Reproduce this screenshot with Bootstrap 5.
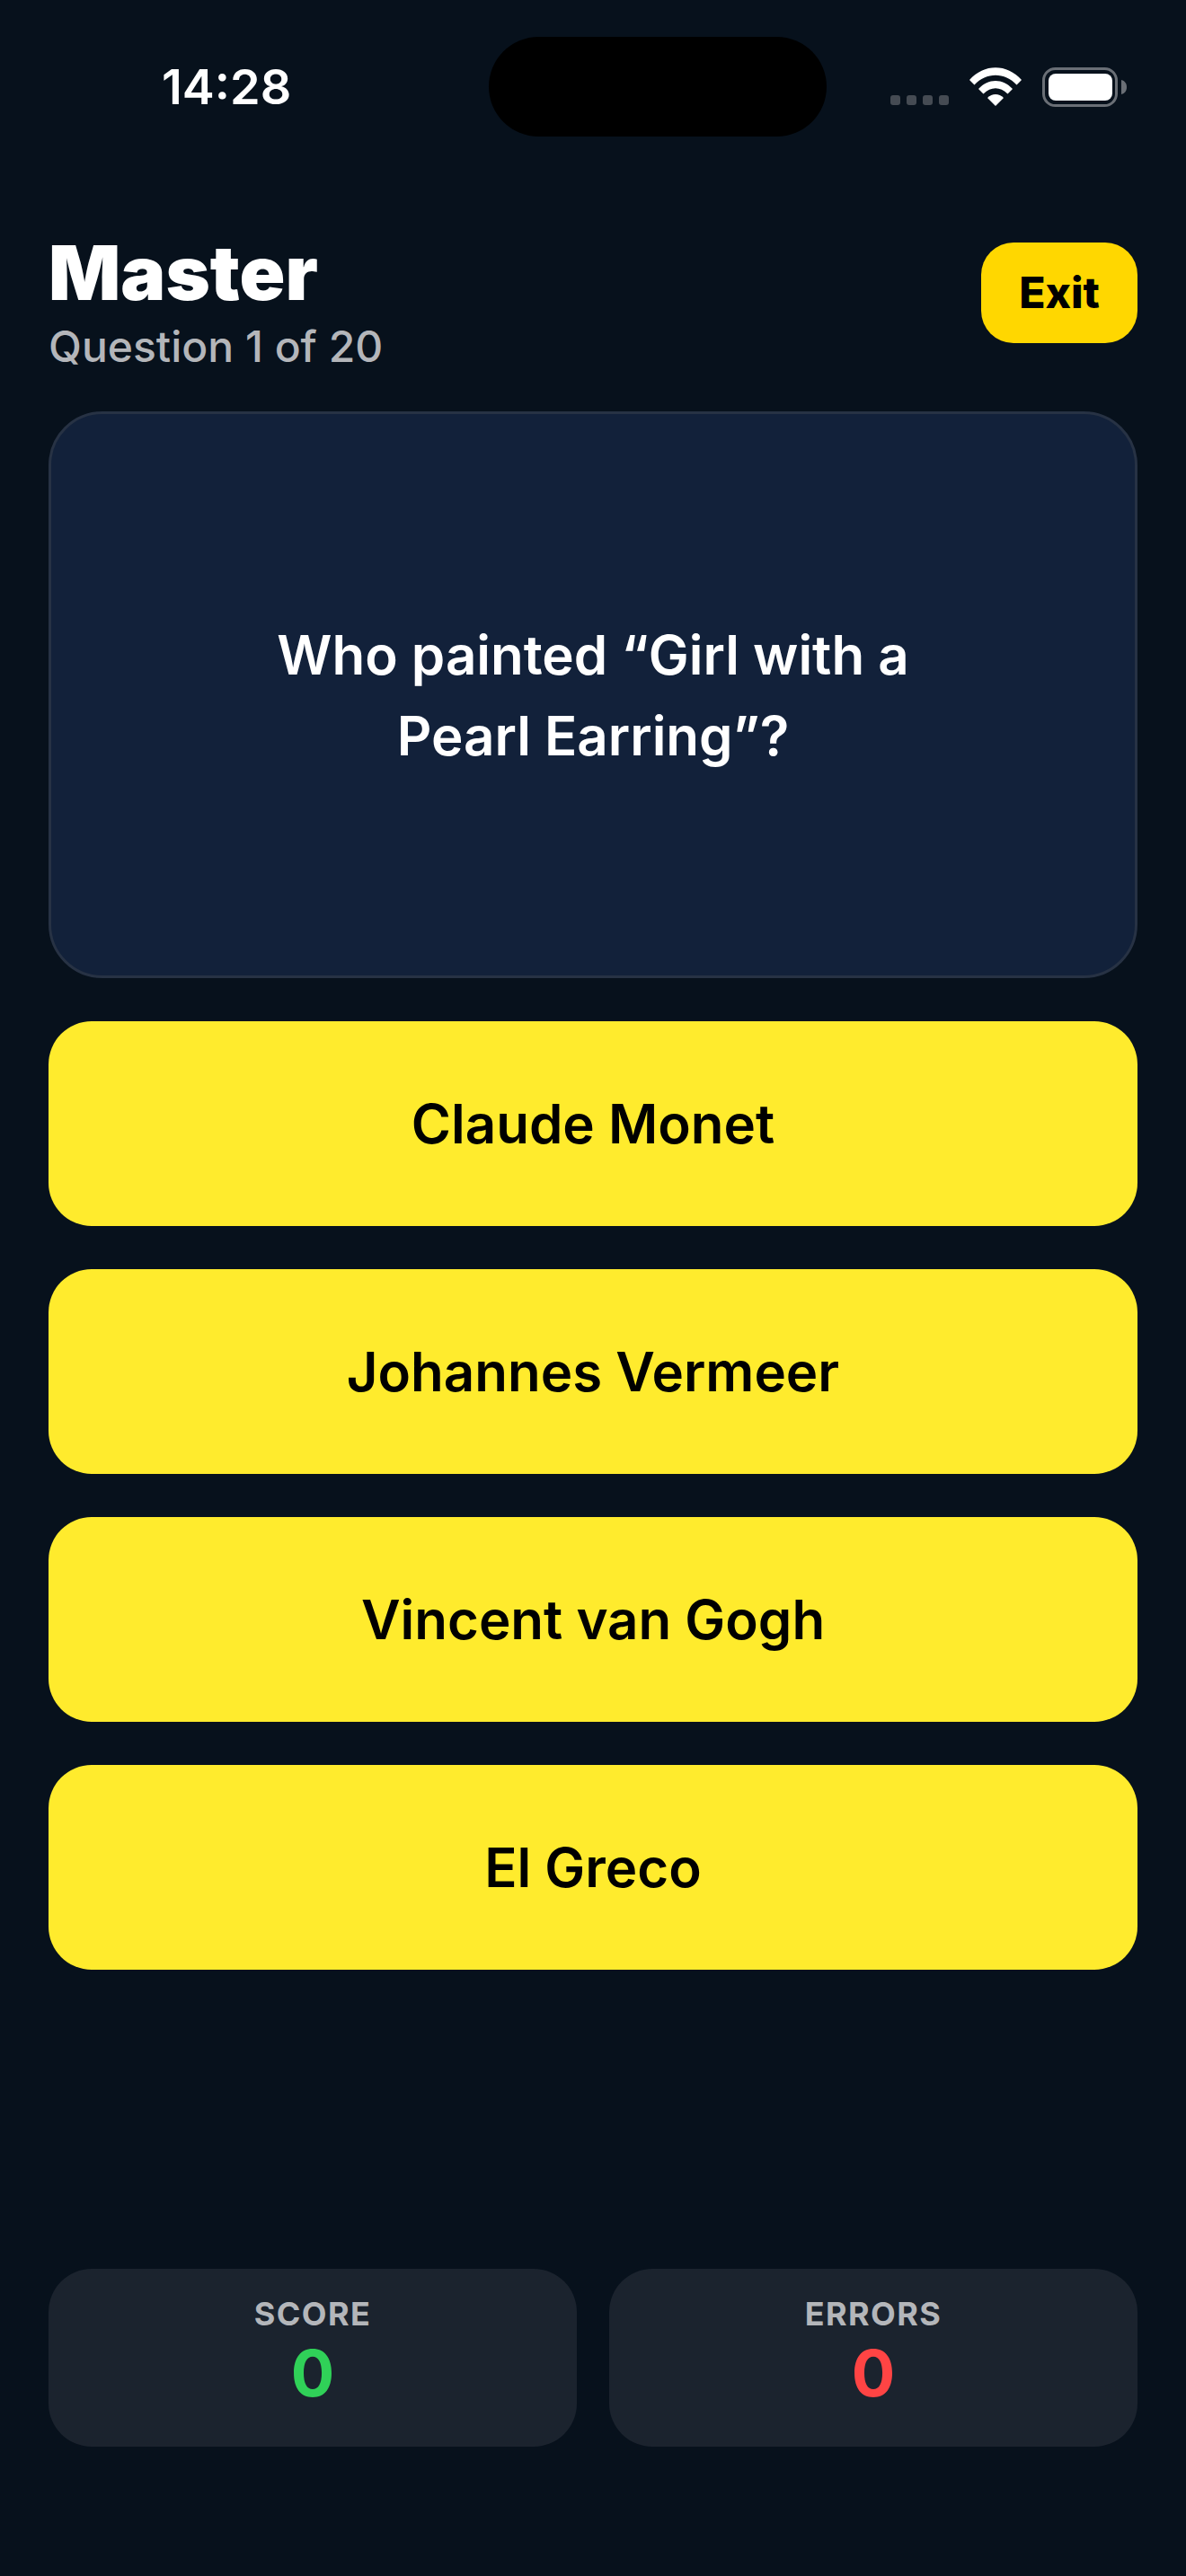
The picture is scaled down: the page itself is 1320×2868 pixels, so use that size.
<!DOCTYPE html>
<html lang="en">
<head>
  <meta charset="UTF-8" />
  <meta name="viewport" content="width=device-width, initial-scale=1" />
  <title>Quiz</title>
  <link href="https://cdn.jsdelivr.net/npm/bootstrap@5.3.0/dist/css/bootstrap.min.css" rel="stylesheet" />
  <style>
    html, body { background: #07111c; }
    body { font-family: "Inter", "Liberation Sans", sans-serif; color: #fff; }
    .phone { width: 1320px; height: 2868px; padding: 0 54px; }
    .status-row { height: 152px; padding-top: 41px; }
    .clock-box { width: 418px; padding: 29px 0 0 126px; font-size: 54px; line-height: 54px; font-weight: 600; }
    .island { width: 376px; height: 111px; border-radius: 56px; background: #000; }
    .status-icons { padding: 34px 12px 0 0; gap: 23px; }
    .dots { gap: 7px; padding-top: 31px; }
    .dots i { display: block; width: 11px; height: 11px; border-radius: 3px; background: #454b53; }
    .status-icons svg { display: block; }
    .head-row { margin-top: 101px; height: 205px; }
    .quiz-title { font-size: 84px; line-height: 102px; font-weight: 900; margin: 0; }
    .quiz-sub { font-size: 48px; line-height: 58px; font-weight: 500; color: #b4b6ba; margin-top: 2px; }
    .exit-btn { width: 174px; height: 112px; border-radius: 36px; background: #ffd700; border: 0; color: #000; font-size: 48px; font-weight: 800; margin-top: 17px; padding: 0; }
    .exit-btn:hover { background: #ffd700; color: #000; }
    .question-box { height: 631px; background: #12213a; border: 3px solid #273244; border-radius: 60px; font-size: 60px; line-height: 90px; font-weight: 600; text-align: center; margin-bottom: 48px; }
    .answers { gap: 48px; }
    .answer-btn { height: 228px; background: #ffeb2d; border: 0; border-radius: 48px; color: #000; font-size: 60px; font-weight: 600; }
    .answer-btn:hover { background: #ffeb2d; color: #000; }
    .stats { margin-top: 333px; gap: 36px; }
    .stat-box { flex: 1 1 0; height: 198px; background: #1b232e; border-radius: 48px; text-align: center; padding-top: 28px; }
    .stat-label { font-size: 36px; line-height: 44px; font-weight: 700; letter-spacing: 1.4px; color: #b4b6ba; }
    .stat-value { font-size: 72px; line-height: 88px; font-weight: 700; }
    .val-good { color: #30d158; }
    .val-bad { color: #ff4444; }
  </style>
</head>
<body>
  <div class="phone">

    <!-- Status bar -->
    <div class="status-row d-flex justify-content-between mx-n5">
      <div class="clock-box">14:28</div>
      <div class="island"></div>
      <div class="status-icons d-flex align-items-start">
        <div class="dots d-flex"><i></i><i></i><i></i><i></i></div>
        <svg width="58" height="43" viewBox="0 0 58 43">
          <path fill="#fff" d="M0 14 C16 -4.500 42 -4.500 58 14 L52.500 19.500 C39.500 5 18.500 5 5.500 19.500 Z" />
          <path fill="#fff" d="M10 24 C21 12 37 12 48 24 L42.500 29.500 C34 21 24 21 15.500 29.500 Z" />
          <path fill="#fff" d="M20 34 C25 28.500 33 28.500 38 34 L29 43 Z" />
        </svg>
        <svg width="94" height="44" viewBox="0 0 94 44" class="batt">
          <rect x="1.500" y="1.500" width="81" height="41" rx="13" fill="none" stroke="#6a6f76" stroke-width="3" />
          <rect x="7" y="7" width="71" height="30" rx="8" fill="#fff" />
          <path fill="#6a6f76" d="M88 14 C92 15 94 18 94 22 C94 26 92 29 88 30 Z" />
        </svg>
      </div>
    </div>

    <!-- Title row -->
    <div class="head-row d-flex justify-content-between align-items-start">
      <div>
        <h1 class="quiz-title">Master</h1>
        <div class="quiz-sub">Question 1 of 20</div>
      </div>
      <button class="btn exit-btn" type="button">Exit</button>
    </div>

    <!-- Question -->
    <div class="question-box d-flex align-items-center justify-content-center">
      <div>Who painted “Girl with a<br />Pearl Earring”?</div>
    </div>

    <!-- Answers -->
    <div class="answers d-flex flex-column">
      <button class="btn answer-btn" type="button">Claude Monet</button>
      <button class="btn answer-btn" type="button">Johannes Vermeer</button>
      <button class="btn answer-btn" type="button">Vincent van Gogh</button>
      <button class="btn answer-btn" type="button">El Greco</button>
    </div>

    <!-- Score -->
    <div class="stats d-flex">
      <div class="stat-box">
        <div class="stat-label">SCORE</div>
        <div class="stat-value val-good">0</div>
      </div>
      <div class="stat-box">
        <div class="stat-label">ERRORS</div>
        <div class="stat-value val-bad">0</div>
      </div>
    </div>

  </div>
  <script src="https://cdn.jsdelivr.net/npm/bootstrap@5.3.0/dist/js/bootstrap.bundle.min.js"></script>
</body>
</html>
